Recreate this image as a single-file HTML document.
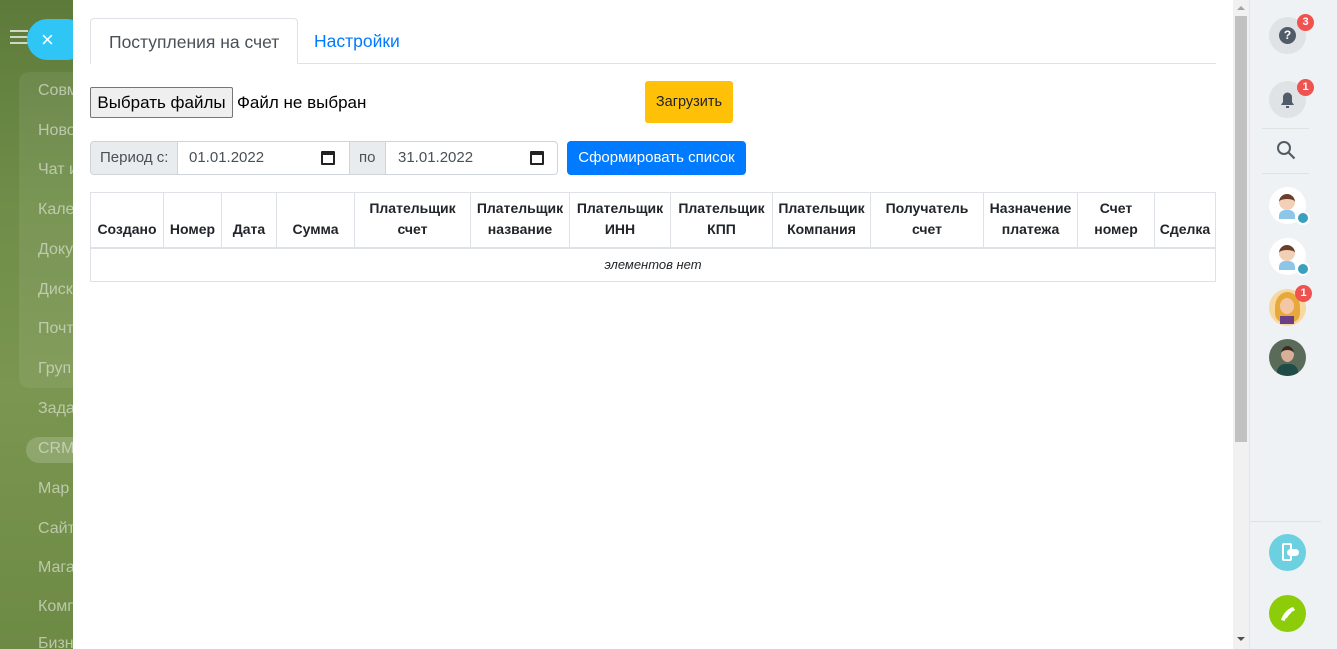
<!DOCTYPE html>
<html><head><meta charset="utf-8"><style>
*{box-sizing:border-box;margin:0;padding:0}
body{width:1337px;height:649px;overflow:hidden;position:relative;font-family:"Liberation Sans",sans-serif;background:#fff}
.left{position:absolute;left:0;top:0;width:73px;height:649px;background:linear-gradient(180deg,#5d7a3a 0%,#6f8d48 30%,#7a9650 60%,#6d8a45 100%);overflow:hidden}
.left .m{position:absolute;left:38px;color:#d5dccb;font-size:16px;white-space:nowrap;opacity:.75}
.grp{position:absolute;left:19px;top:72px;width:80px;height:316px;border-radius:10px;background:rgba(255,255,255,.07)}
.close{position:absolute;left:27px;top:19px;width:60px;height:41px;border-radius:21px;background:#2fc6f6;color:#fff;font-size:22px;line-height:41px;padding-left:14px}
.burger{position:absolute;left:10px;top:30px;width:18px}
.burger i{display:block;height:2px;background:#cfd8c4;margin-bottom:4px}
.main{position:absolute;left:73px;top:0;width:1160px;height:649px;background:#fff}
.tab{position:absolute;top:18px;height:46px;font-size:17.5px;line-height:46px;padding:0 18px}
.t1{left:17px;border:1px solid #dee2e6;border-bottom-color:#fff;border-radius:4px 4px 0 0;color:#495057;background:#fff;z-index:2}
.t2{left:223px;color:#007bff}
.tabline{position:absolute;left:17px;top:63px;width:1126px;height:1px;background:#dee2e6}
.fbtn{position:absolute;left:17px;top:87px;width:143px;height:31px;border:1px solid #767676;background:#efefef;border-radius:2px;font-size:17px;line-height:29px;text-align:center;color:#000;white-space:nowrap}
.ftxt{position:absolute;left:164px;top:87px;font-size:17px;line-height:31px;color:#000}
.load{position:absolute;left:572px;top:81px;width:88px;height:42px;background:#ffc107;border-radius:3px;font-size:14.5px;line-height:42px;text-align:center;color:#212529}
.ig{position:absolute;top:141px;height:34px;border:1px solid #ced4da;font-size:15px;line-height:32px;color:#495057}
.addon{background:#e9ecef}
.btnb{position:absolute;left:494px;top:141px;width:179px;height:34px;background:#007bff;color:#fff;border-radius:4px;font-size:15px;line-height:34px;text-align:center;white-space:nowrap}
.cal{position:absolute;top:9px;width:14px;height:14px;border:2px solid #222;border-top-width:4px;border-radius:1px}
table{position:absolute;left:17px;top:192px;width:1126px;border-collapse:collapse;font-size:14px;color:#212529}
th{border:1px solid #dee2e6;border-bottom:2px solid #dee2e6;vertical-align:bottom;padding:0 4px 7px;height:55px;font-weight:bold;line-height:21px;text-align:center;white-space:nowrap}
td{border:1px solid #dee2e6;height:34px;text-align:center;font-style:italic;font-size:13px;color:#212529}
.sb{position:absolute;left:1233px;top:0;width:16px;height:649px;background:#f1f1f1}
.thumb{position:absolute;left:2px;top:16px;width:12px;height:426px;background:#c1c1c1}
.right{position:absolute;left:1249px;top:0;width:88px;height:649px;background:#eef2f4;border-left:1px solid #e2e6e9}
.circ{position:absolute;left:19px;width:37px;height:37px;border-radius:50%}
.badge{position:absolute;width:17px;height:17px;border-radius:50%;background:#f0534f;color:#fff;font-size:11px;font-weight:bold;text-align:center;line-height:17px}
.hr{position:absolute;left:12px;width:47px;height:1px;background:#dde2e5}
</style></head><body>
<div class="left">
<div class="grp"></div>
<div class="m" style="top:82px">Совм</div>
<div class="m" style="top:122px">Ново</div>
<div class="m" style="top:161px">Чат и</div>
<div class="m" style="top:201px">Кале</div>
<div class="m" style="top:241px">Доку</div>
<div class="m" style="top:281px">Диск</div>
<div class="m" style="top:320px">Почт</div>
<div class="m" style="top:360px">Груп</div>
<div class="m" style="top:400px">Зада</div>
<div style="position:absolute;left:26px;top:437px;width:60px;height:26px;border-radius:13px;background:rgba(255,255,255,.18)"></div>
<div class="m" style="top:440px">CRM</div>
<div class="m" style="top:480px">Мар</div>
<div class="m" style="top:520px">Сайт</div>
<div class="m" style="top:559px">Мага</div>
<div class="m" style="top:598px">Комп</div>
<div class="m" style="top:635px">Бизн</div>
<div class="burger"><i></i><i></i><i></i></div>
<div class="close">×</div>
</div>
<div class="main">
<div class="tab t1">Поступления на счет</div>
<div class="tab t2">Настройки</div>
<div class="tabline"></div>
<div class="fbtn">Выбрать файлы</div>
<div class="ftxt">Файл не выбран</div>
<div class="load">Загрузить</div>
<div class="ig addon" style="left:17px;width:88px;border-radius:4px 0 0 4px;padding-left:9px">Период с:</div>
<div class="ig" style="left:104px;width:173px;padding-left:11px">01.01.2022<span class="cal" style="left:143px"></span></div>
<div class="ig addon" style="left:276px;width:37px;padding-left:9px">по</div>
<div class="ig" style="left:312px;width:173px;border-radius:0 4px 4px 0;padding-left:12px">31.01.2022<span class="cal" style="left:144px"></span></div>
<div class="btnb">Сформировать список</div>
<table>
<tr><th style="width:73px">Создано</th><th style="width:58px">Номер</th><th style="width:55px">Дата</th><th style="width:78px">Сумма</th><th style="width:116px">Плательщик<br>счет</th><th style="width:99px">Плательщик<br>название</th><th style="width:101px">Плательщик<br>ИНН</th><th style="width:102px">Плательщик<br>КПП</th><th style="width:98px">Плательщик<br>Компания</th><th style="width:113px">Получатель<br>счет</th><th style="width:94px">Назначение<br>платежа</th><th style="width:77px">Счет<br>номер</th><th>Сделка</th></tr>
<tr><td colspan="13">элементов нет</td></tr>
</table>
</div>
<div class="sb"><div class="thumb"></div><div style="position:absolute;left:4px;top:6px;border:4px solid transparent;border-bottom:4px solid #a3a3a3;border-top:0"></div><div style="position:absolute;left:4px;top:637px;border:4px solid transparent;border-top:4px solid #505050;border-bottom:0"></div></div>
<div class="right">
<div class="circ" style="top:17px;background:#dfe3e6"><div style="position:absolute;left:10px;top:10px;width:17px;height:17px;border-radius:50%;background:#525c69;color:#fff;font-size:12px;font-weight:bold;text-align:center;line-height:17px">?</div></div>
<div class="badge" style="left:47px;top:14px">3</div>
<div class="circ" style="top:81px;background:#dfe3e6"><svg width="37" height="37" viewBox="0 0 37 37"><path d="M12 24h13l-2-3v-5a4.5 4.5 0 0 0-9 0v5z" fill="#525c69"/><rect x="17" y="25" width="3" height="2" fill="#525c69"/></svg></div>
<div class="badge" style="left:47px;top:79px">1</div>
<div class="hr" style="top:128px"></div>
<svg style="position:absolute;left:26px;top:140px" width="22" height="22" viewBox="0 0 22 22"><circle cx="8" cy="8" r="6" fill="none" stroke="#525c69" stroke-width="2"/><path d="M12.5 12.5l6 6" stroke="#525c69" stroke-width="2.2"/></svg>
<div class="hr" style="top:173px"></div>
<div class="circ" style="top:187px;background:#fff"><div style="position:absolute;left:10px;top:7px;width:16px;height:16px;border-radius:50%;background:#f2d0b5;border-top:5px solid #6b3e2b"></div><div style="position:absolute;left:10px;top:23px;width:16px;height:9px;background:#8ec6ea;border-radius:6px 6px 0 0"></div></div>
<div style="position:absolute;left:46px;top:211px;width:14px;height:14px;border-radius:50%;background:#3aa0bf;border:2px solid #fff"></div>
<div class="circ" style="top:238px;background:#fff"><div style="position:absolute;left:10px;top:7px;width:16px;height:16px;border-radius:50%;background:#f2d0b5;border-top:5px solid #6b3e2b"></div><div style="position:absolute;left:10px;top:23px;width:16px;height:9px;background:#8ec6ea;border-radius:6px 6px 0 0"></div></div>
<div style="position:absolute;left:46px;top:262px;width:14px;height:14px;border-radius:50%;background:#3aa0bf;border:2px solid #fff"></div>
<div class="circ" style="top:289px;background:#f6d8a0"><div style="position:absolute;left:6px;top:3px;width:25px;height:30px;border-radius:50% 50% 30% 30%;background:#e6a93a"></div><div style="position:absolute;left:11px;top:9px;width:14px;height:16px;border-radius:50%;background:#f3c7a5"></div><div style="position:absolute;left:11px;top:27px;width:14px;height:8px;background:#6b3f86"></div></div>
<div class="badge" style="left:45px;top:285px">1</div>
<div class="circ" style="top:339px;background:#5b6b5a;overflow:hidden"><div style="position:absolute;left:12px;top:7px;width:13px;height:16px;border-radius:50%;background:#d8b09a;border-top:4px solid #3a2a22"></div><div style="position:absolute;left:8px;top:25px;width:21px;height:12px;background:#1f4c47;border-radius:8px 8px 0 0"></div></div>
<div class="hr" style="top:521px;left:0;width:71px"></div>
<div class="circ" style="top:534px;background:#6dd0e1"><div style="position:absolute;left:13px;top:9px;width:10px;height:18px;border:2px solid #fff;border-radius:2px"></div><div style="position:absolute;left:18px;top:15px;width:12px;height:7px;background:#fff;border-radius:4px"></div></div>
<div class="circ" style="top:595px;background:#8ccc09"><svg width="37" height="37" viewBox="0 0 37 37"><path d="M12 25c2-6 6-11 12-13l2 3c-1 1-3 1-4 3-2 2-3 3-4 5-1 0-2 1-2 3z" fill="#fff"/></svg></div>
</div>
</body></html>
